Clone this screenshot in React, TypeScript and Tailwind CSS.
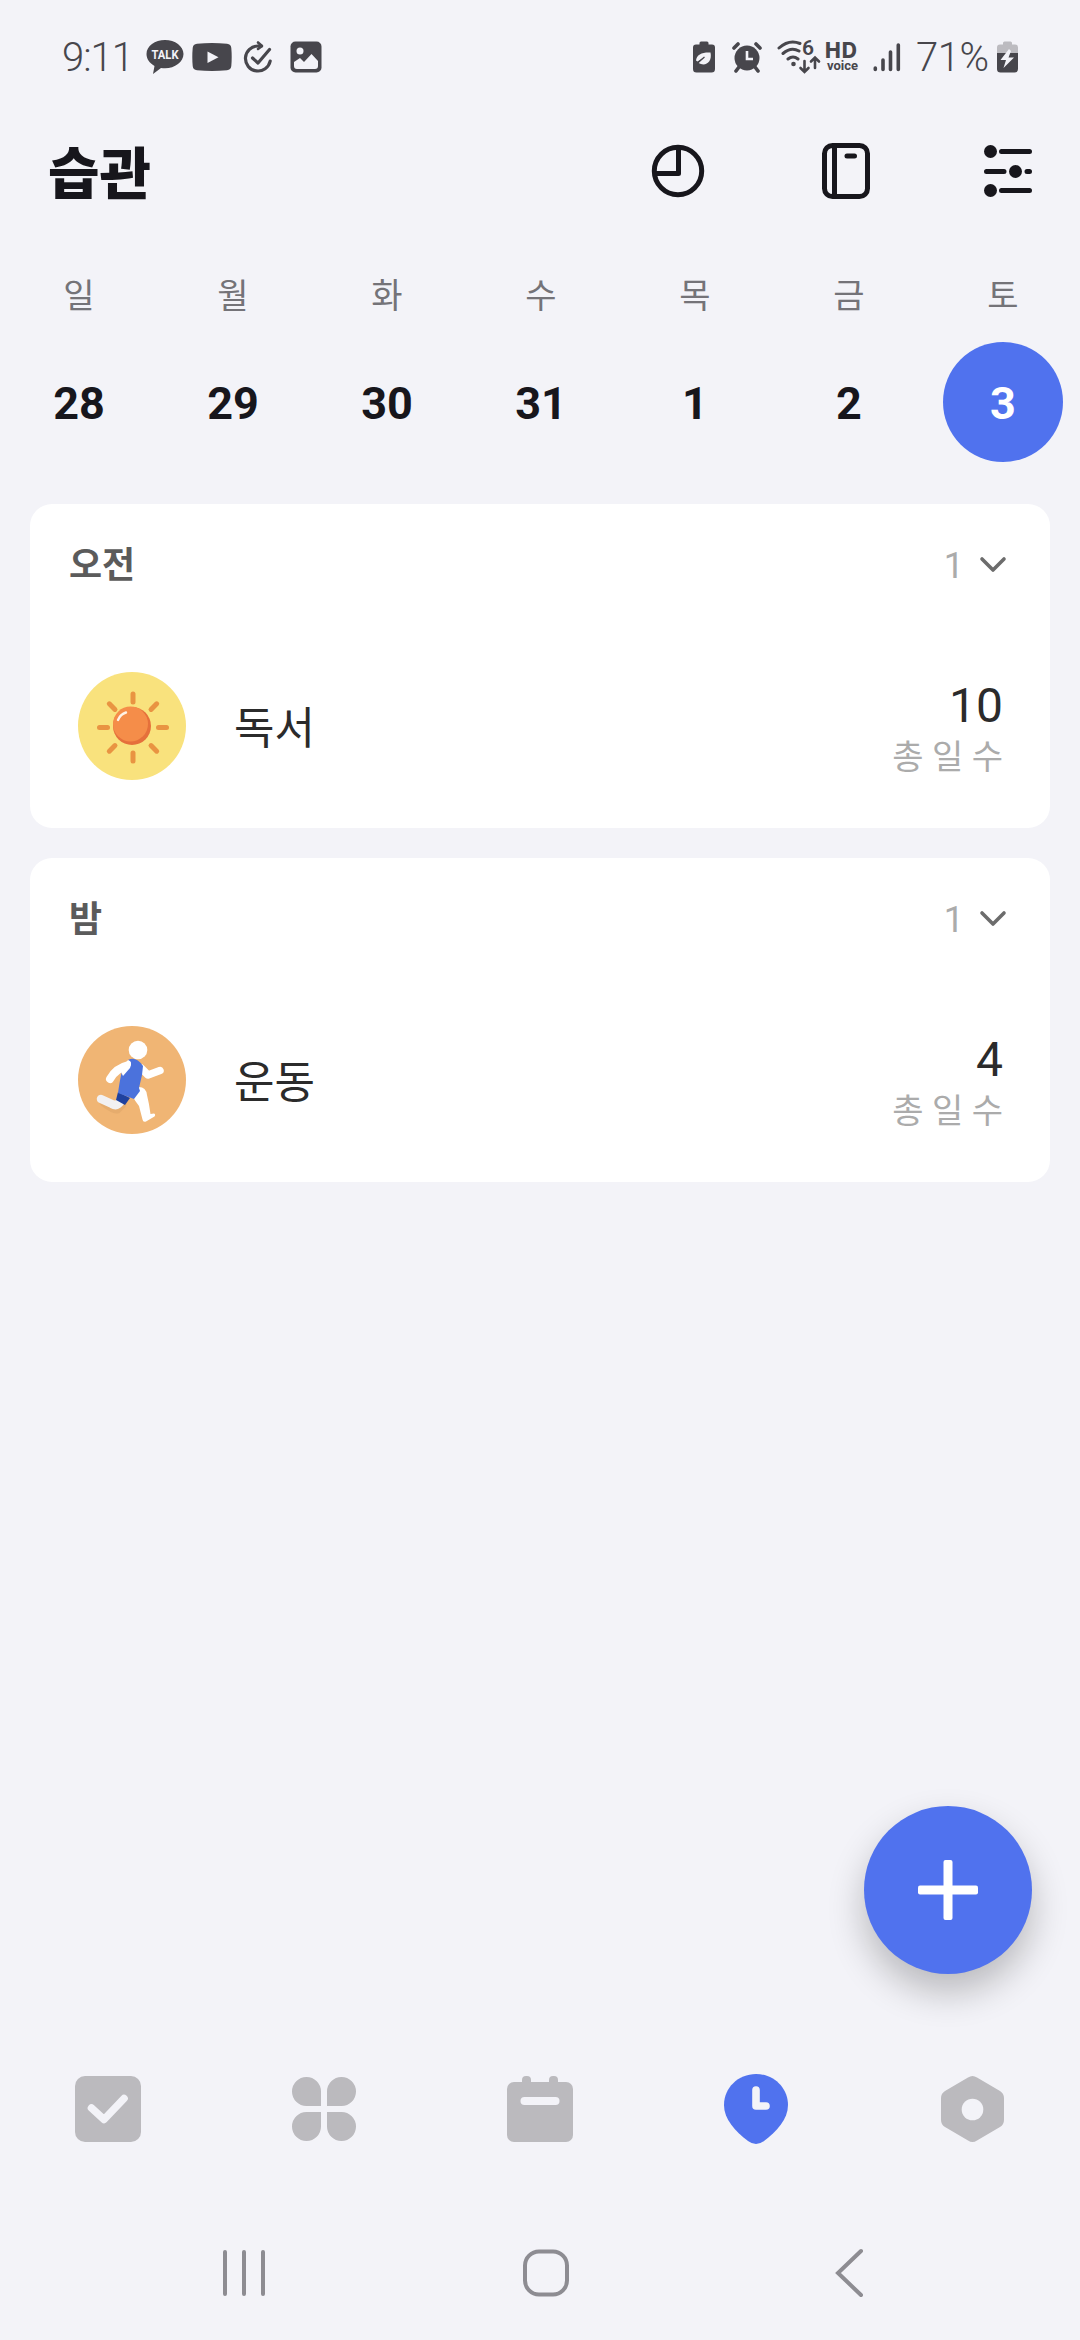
import React from 'react';

const days = [
    { name: '일', date: 28 },
    { name: '월', date: 29 },
    { name: '화', date: 30 },
    { name: '수', date: 31 },
    { name: '목', date: 1 },
    { name: '금', date: 2 },
    { name: '토', date: 3, active: true }
];

const SunIcon = () => (
    <svg width="108" height="108" viewBox="0 0 108 108">
        <circle cx="54" cy="54" r="54" fill="#f9e27d" />
        <g stroke="#e99442" strokeWidth="5" strokeLinecap="round">
            {[0, 45, 90, 135, 180, 225, 270, 315].map((deg) => (
                <path key={deg} d="M55 22v8" transform={`rotate(${deg} 55 55.500)`} />
            ))}
        </g>
        <circle cx="54" cy="54" r="19" fill="#e5703b" />
        <circle cx="52.500" cy="52" r="17.500" fill="#f58d49" />
        <path d="M40 48q2.500-6 8-7.500" stroke="#fff3e6" strokeWidth="2.400" fill="none" strokeLinecap="round" />
    </svg>
);

const RunnerIcon = () => (
    <svg width="108" height="108" viewBox="0 0 108 108">
        <circle cx="54" cy="54" r="54" fill="#f0b574" />
        <g fill="none" strokeLinecap="round" strokeLinejoin="round">
            <path d="M41 75L36 80Q33 81 23 73" stroke="#dba365" strokeWidth="9" transform="translate(3 3)" opacity=".5" />
            <path d="M51 39Q38 42 32 53" stroke="#fff" strokeWidth="8" />
            <path d="M63 42L70 49L82 44.500" stroke="#fff" strokeWidth="7.500" />
            <path d="M43 75Q39 81 34 78L23 73" stroke="#f2f1f2" strokeWidth="8.500" />
        </g>
        <path d="M40 66l-2 8 9 5 5-7z" fill="#1f419e" />
        <path d="M59 61q9-1 10 8 2 8 3.500 19l3.500-.5q2 1 .5 3L68 95.500q-3 1-3.500-2L61 80q-4-5-6-9z" fill="#fff" />
        <path d="M50 34q8-4 15 6l-1 9-3 13 1 3-6 8-16-6q2-14 4-22 1-2 9-6z" fill="#4b72dc" />
        <path d="M50 34q5 1 2 8l-7 8-3-6z" fill="#fff" />
        <circle cx="60" cy="24" r="9.300" fill="#fff" />
    </svg>
);

const groups = [
    { title: '오전', name: '독서', count: 10, icon: SunIcon },
    { title: '밤', name: '운동', count: 4, icon: RunnerIcon }
];

const StatusBar = () => (
    <div className="flex h-[114px] items-center justify-between pl-[62px] pr-[61px] text-[#47464c]">
        <div className="flex items-center">
            <span className="w-[84px] pt-[2px] text-[40px] font-light leading-none tracking-[-1px]">9:11</span>
            <svg width="38" height="36" viewBox="0 0 38 36">
                <path d="M19 1C9 1 .5 7 .5 15c0 5 3 9 8 12L7 35l8-6q2 .3 4 .3c10 0 18.500-6.500 18.500-14.300S29 1 19 1z" fill="currentColor" />
                <text x="19" y="20" textAnchor="middle" textLength="27" lengthAdjust="spacingAndGlyphs" fontSize="12.500" fontWeight="700" fill="#f3f3f8">TALK</text>
            </svg>
            <svg className="ml-[8px]" width="40" height="28" viewBox="0 0 40 28">
                <path d="M5 .8Q20-.8 35 .8q4 .4 4.300 4.200.8 9 0 18-.4 3.800-4.300 4.200-15 1.600-30 0Q1 26.800.7 23-.1 14 .7 5 1 1.200 5 .8z" fill="currentColor" />
                <path d="M15.500 8.500v11.500l11-5.800z" fill="#f3f3f8" />
            </svg>
            <svg className="ml-[11px]" width="30" height="34" viewBox="0 0 30 34" fill="none" stroke="currentColor" strokeWidth="3.200" strokeLinecap="round" strokeLinejoin="round">
                <path d="M18.500 6H15a12.500 12.500 0 1 0 12.200 15" />
                <path d="M15 2.500L19 6l-4 3" strokeWidth="2.600" />
                <path d="M9.500 18l5.500 5 11.500-13.500" />
            </svg>
            <svg className="ml-[17px]" width="32" height="32" viewBox="0 0 32 32">
                <rect x=".5" y=".5" width="31" height="31" rx="5" fill="currentColor" />
                <circle cx="10" cy="10" r="3.500" fill="#f3f3f8" />
                <path d="M4 21l6-4 4 4 7.500-8 6.500 7v5q0 3-3 3H7q-3 0-3-3z" fill="#f3f3f8" />
            </svg>
        </div>
        <div className="flex items-center">
            <svg width="22" height="32" viewBox="0 0 22 32">
                <path d="M6.500 3.500V2q0-1.500 1.500-1.500h6q1.500 0 1.500 1.500v1.500H19q3 0 3 3V28q0 3.500-3.500 3.500h-15Q0 31.500 0 28V6.500q0-3 3-3z" fill="currentColor" />
                <path d="M17.500 11.500c-8-.5-14 2-14.500 8l1.500 1 6-4-5 5.500c7 4 14-1 12-10.500z" fill="#f3f3f8" />
                <path d="M3.500 23l8-7" stroke="currentColor" strokeWidth="1.200" />
            </svg>
            <svg className="ml-[16px]" width="32" height="32" viewBox="0 0 32 32">
                <circle cx="16" cy="17" r="12.500" fill="currentColor" />
                <g stroke="currentColor" strokeWidth="3.600" strokeLinecap="round">
                    <path d="M3 7l4-4M29 7l-4-4M8 26l-3 4M24 26l3 4" />
                </g>
                <path d="M16 10v8h6" stroke="#f3f3f8" strokeWidth="2.600" fill="none" />
            </svg>
            <div className="relative ml-[14px] h-[34px] w-[44px]">
                <svg width="44" height="34" viewBox="0 0 44 34" fill="none" stroke="currentColor" strokeWidth="3" strokeLinecap="round">
                    <path d="M2 8Q12-1 23 3.500M6 13.500q8-7 16-2.500M11 19q5-4 10 0" />
                    <circle cx="16.500" cy="24" r="2.300" fill="currentColor" stroke="none" />
                    <path d="M27.500 21v10.500M23.500 28l4 4 4-4M38 28V18M34 21.500l4-4 4 4" strokeWidth="2.600" />
                </svg>
                <span className="absolute left-[25px] top-0 text-[21px] font-semibold leading-[17px]">6</span>
            </div>
            <div className="ml-[4px] flex w-[36px] flex-col pt-[1px]">
                <span className="font-[Inter,sans-serif] text-[21px] font-extrabold leading-[16px] tracking-[1px]">HD</span>
                <span className="pl-[2px] text-[13px] font-bold leading-[13px]">voice</span>
            </div>
            <svg className="ml-[12px]" width="28" height="32" viewBox="0 0 28 32" stroke="currentColor" strokeWidth="3.600" strokeLinecap="round">
                <path d="M2.300 27v1.500M10 19v9.500M17.500 11v17.500M25.300 4v24.500" />
            </svg>
            <span className="ml-[15px] w-[81px] pt-[2px] text-[40px] font-light leading-none tracking-[-0.5px]">71%</span>
            <svg width="22" height="32" viewBox="0 0 22 32">
                <path d="M6 3.500V2q0-1.500 1.500-1.500h6Q15 .5 15 2v1.500h3q3 0 3 3V12H0V6.500q0-3 3-3z" fill="#bcbbc0" />
                <path d="M0 12h21v16q0 3.500-3.500 3.500h-14Q0 31.500 0 28z" fill="currentColor" />
                <path d="M12 8L3.500 19H9l-2.500 8L17 16.500h-5.500L14 10z" fill="#f3f3f8" />
            </svg>
        </div>
    </div>
);

const Header = () => (
    <div className="flex h-[114px] items-center justify-between pl-[48px] pr-[48px] text-[#17161c]">
        <h1 className="pt-[7px] text-[56px] font-black leading-none">습관</h1>
        <div className="flex items-center">
            <svg width="54" height="54" viewBox="0 0 54 54" fill="none" stroke="currentColor" strokeWidth="5" strokeLinejoin="round">
                <circle cx="27" cy="27" r="23.700" />
                <path d="M27.500 3.500v26H4" />
            </svg>
            <svg className="ml-[117px]" width="48" height="56" viewBox="0 0 48 56" fill="none" stroke="currentColor" strokeWidth="5" strokeLinecap="round">
                <rect x="2.500" y="2.500" width="43" height="51" rx="8" />
                <path d="M12.500 3v50M25 13h7.500" />
            </svg>
            <svg className="ml-[114px]" width="48" height="54" viewBox="0 0 48 54" fill="currentColor" stroke="currentColor" strokeWidth="5" strokeLinecap="round">
                <path d="M17.500 7.500H45.500M2.500 27.500H20M43 27.500h2.500M17.500 46.500H45.500" />
                <g stroke="none">
                    <rect x="12" y="4" width="3" height="7" fill="#f3f3f8" />
                    <circle cx="6.500" cy="7.500" r="6.500" />
                    <circle cx="31.500" cy="27.500" r="8.500" fill="#f3f3f8" />
                    <circle cx="31.500" cy="27.500" r="6.500" />
                    <rect x="12" y="43" width="3" height="7" fill="#f3f3f8" />
                    <circle cx="6.500" cy="46.500" r="6.500" />
                </g>
            </svg>
        </div>
    </div>
);

const WeekStrip = () => (
    <div className="flex h-[276px] pl-[2px] pt-[46px]">
        {days.map((day) => (
            <div key={day.name} className="flex w-[154px] flex-col items-center">
                <span className="h-[68px] text-[34px] leading-[44px] text-[#747378]">{day.name}</span>
                <span
                    className={
                        day.active
                            ? 'flex size-[120px] items-center justify-center rounded-full bg-[#5072ee] pt-[3px] text-[45px] font-bold text-white'
                            : 'flex size-[120px] items-center justify-center pt-[3px] text-[45px] font-bold text-[#17161c]'
                    }
                >
                    {day.date}
                </span>
            </div>
        ))}
    </div>
);

const TabBar = () => (
    <div className="flex h-[124px] items-center text-[#bbbabe]">
        <div className="flex flex-1 justify-center">
            <svg width="66" height="66" viewBox="0 0 66 66">
                <rect width="66" height="66" rx="10" fill="currentColor" />
                <path d="M16.500 32L29 43.500 49 22.500" fill="none" stroke="#f3f3f8" strokeWidth="7.600" strokeLinecap="round" strokeLinejoin="round" />
            </svg>
        </div>
        <div className="flex flex-1 justify-center">
            <svg width="64" height="64" viewBox="0 0 64 64" fill="currentColor">
                <path d="M29 29H14.500A14.500 14.500 0 1 1 29 14.500zM35 29h14.500A14.500 14.500 0 1 0 35 14.500zM29 35H14.500A14.500 14.500 0 1 0 29 49.500zM35 35h14.500A14.500 14.500 0 1 1 35 49.500z" />
            </svg>
        </div>
        <div className="flex flex-1 justify-center">
            <svg width="66" height="66" viewBox="0 0 66 66" fill="currentColor">
                <rect y="6" width="66" height="60" rx="7" />
                <rect x="15" width="9" height="14" rx="4" />
                <rect x="42" width="9" height="14" rx="4" />
                <rect x="13.500" y="21" width="39" height="8" rx="4" fill="#f3f3f8" />
            </svg>
        </div>
        <div className="flex flex-1 justify-center">
            <svg width="64" height="70" viewBox="0 0 64 70">
                <path d="M32 0C14 0 0 14 0 31c0 14 11 26 24 36q8 6 16 0c13-10 24-22 24-36C64 14 50 0 32 0z" fill="#5072ee" />
                <path d="M32 16v16h10" fill="none" stroke="#f3f3f8" strokeWidth="7.600" strokeLinecap="round" strokeLinejoin="round" />
            </svg>
        </div>
        <div className="flex flex-1 justify-center">
            <svg width="63" height="66" viewBox="0 0 63 66">
                <path d="M27 1.500q4.500-3 9 0L59 15q4 2.500 4 7v22q0 4.500-4 7L36 64.500q-4.500 3-9 0L4 51q-4-2.500-4-7V22q0-4.500 4-7z" fill="currentColor" />
                <circle cx="31.500" cy="33.500" r="10.800" fill="#f3f3f8" />
            </svg>
        </div>
    </div>
);

const App: React.FC = () => {
    return (
        <div className="relative flex h-[2340px] w-[1080px] flex-col overflow-hidden bg-[#f3f3f8] font-[Roboto,'Noto_Sans_CJK_KR',sans-serif]">
            <StatusBar />
            <Header />
            <WeekStrip />

            <main className="flex flex-1 flex-col gap-[30px] px-[30px]">
                {groups.map((group) => {
                    const Icon = group.icon;
                    return (
                        <section key={group.title} className="h-[324px] rounded-[22px] bg-white">
                            <div className="flex h-[122px] items-center justify-between pl-[39px] pr-[43px]">
                                <h2 className="pt-[2px] text-[36px] font-bold leading-none text-[#5b5b5b]">{group.title}</h2>
                                <div className="flex items-center gap-[15px] text-[36px] leading-none text-[#ababab]">
                                    <span className="pt-[2px]">1</span>
                                    <svg width="28" height="18" viewBox="0 0 28 18" fill="none" stroke="#6c6c6c" strokeWidth="3.600" strokeLinecap="round" strokeLinejoin="round">
                                        <path d="M3 3l11 11L25 3" />
                                    </svg>
                                </div>
                            </div>
                            <div className="flex h-[202px] items-center pb-[2px] pl-[48px] pr-[47px]">
                                <Icon />
                                <span className="ml-[48px] flex-1 pt-[5px] text-[44px] leading-none text-[#2b2b2b]">{group.name}</span>
                                <div className="flex flex-col items-end pt-[10px]">
                                    <span className="text-[48px] leading-[52px] text-[#2b2b2b]">{group.count}</span>
                                    <span className="text-[34px] leading-[50px] text-[#ababab]">총 일 수</span>
                                </div>
                            </div>
                        </section>
                    );
                })}
            </main>

            <TabBar />

            <div className="flex h-[169px] items-center pl-[222px] pr-[216px] pt-[35px]">
                <svg width="44" height="48" viewBox="0 0 44 48" stroke="#8d8c92" strokeWidth="4" strokeLinecap="round">
                    <path d="M3 3v42M22 3v42M41 3v42" />
                </svg>
                <svg className="ml-[257px]" width="46" height="48" viewBox="0 0 46 48" fill="none" stroke="#8d8c92" strokeWidth="4">
                    <rect x="2" y="2.500" width="42" height="43" rx="14" />
                </svg>
                <svg className="ml-[266px]" width="29" height="50" viewBox="0 0 29 50" fill="none" stroke="#8d8c92" strokeWidth="4" strokeLinecap="round">
                    <path d="M26 3L3 25l23 22" />
                </svg>
            </div>

            <button className="absolute left-[864px] top-[1806px] flex size-[168px] items-center justify-center rounded-full bg-[#5072ee] shadow-[0_18px_36px_rgba(0,0,0,0.24)]">
                <svg width="60" height="60" viewBox="0 0 60 60" fill="#fff">
                    <rect x="25.500" width="9" height="60" rx="2" />
                    <rect y="25.500" width="60" height="9" rx="2" />
                </svg>
            </button>
        </div>
    );
};

export default App;
